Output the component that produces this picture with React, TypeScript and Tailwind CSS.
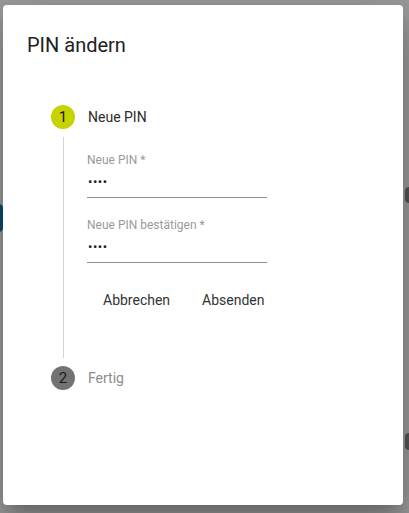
import React from 'react';

const font = { fontFamily: 'Roboto, "Liberation Sans", sans-serif' };

const PinField: React.FC<{ label: string }> = ({ label }) => (
  <div className="w-[180px]">
    <div className="text-[12px] leading-[14px] text-[#9a9a9a]">{label}</div>
    <div className="h-[31px] flex items-center border-b border-[#8f8f8f] text-[13px] tracking-[0.5px] text-[#212121] pl-[1px]">
      ••••
    </div>
  </div>
);

const StepIcon: React.FC<{ n: number; active?: boolean }> = ({ n, active }) => (
  <div
    className={
      'w-6 h-6 rounded-full flex items-center justify-center text-[15px] text-[#1a1a1a] ' +
      (active ? 'bg-[#c6d300]' : 'bg-[#737373]')
    }
  >
    {n}
  </div>
);

export default function App() {
  return (
    <div style={font} className="relative w-[409px] h-[513px] overflow-hidden bg-[#9b9b9b]">
      {/* faded page behind the backdrop */}
      <div className="absolute left-[-12px] top-[203px] w-[16px] h-[30px] rounded-full bg-[#0f4a6e]" />
      <div className="absolute right-[-4px] top-[187px] w-[8px] h-[16px] rounded-full bg-[#555]" />
      <div className="absolute right-[-4px] top-[433px] w-[8px] h-[17px] rounded-full bg-[#555]" />

      <div className="relative pl-[3px] pt-[5px]">
        <div className="w-[400px] h-[500px] bg-white rounded-[4px] shadow-[0_11px_15px_-7px_rgba(0,0,0,0.2),0_24px_38px_3px_rgba(0,0,0,0.14),0_9px_46px_8px_rgba(0,0,0,0.12)] flex flex-col">
          <div className="px-6 pt-[24px] text-[20px] leading-[32px] text-[#212121]">PIN ändern</div>

          <div className="pl-[48px] pt-[44px] flex flex-col">
            <div className="flex items-center h-6">
              <StepIcon n={1} active />
              <span className="ml-[13px] text-[14px] text-[#2b2b2b]">Neue PIN</span>
            </div>

            <div className="ml-[11.5px] mt-2 mb-2 border-l border-[#d4d4d4] h-[221px] pl-[23.5px] pt-[16px]">
              <PinField label="Neue PIN *" />
              <div className="mt-[20px]">
                <PinField label="Neue PIN bestätigen *" />
              </div>
              <div className="mt-[19px] flex">
                <button className="h-9 px-4 text-[14px] text-[#333]">Abbrechen</button>
                <button className="h-9 px-4 text-[14px] text-[#333]">Absenden</button>
              </div>
            </div>

            <div className="flex items-center h-6">
              <StepIcon n={2} />
              <span className="ml-[13px] text-[14px] text-[#8c8c8c]">Fertig</span>
            </div>
          </div>
        </div>
      </div>
    </div>
  );
}
